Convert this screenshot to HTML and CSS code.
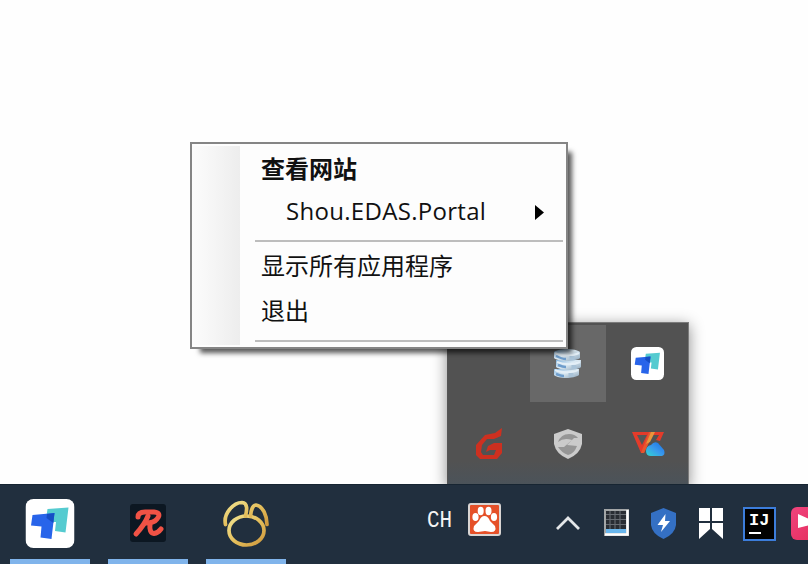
FILE: index.html
```html
<!DOCTYPE html>
<html lang="zh-CN">
<head>
<meta charset="utf-8">
<title>Desktop</title>
<link rel="stylesheet" href="styles.css">
</head>
<body>
<svg class="defs" width="0" height="0">
  <defs>
    <linearGradient id="gold" x1="0" y1="0" x2="1" y2="1"><stop offset="0" stop-color="#f1e491"/><stop offset=".5" stop-color="#e5c05d"/><stop offset="1" stop-color="#cf993d"/></linearGradient>
    <linearGradient id="cloud" x1="0" y1="1" x2="1" y2="0"><stop offset="0" stop-color="#32d6d1"/><stop offset=".5" stop-color="#3998ed"/><stop offset="1" stop-color="#176fe5"/></linearGradient>
    <linearGradient id="disk" x1="0" y1="0" x2="1" y2="1"><stop offset="0" stop-color="#81b2dc"/><stop offset=".45" stop-color="#dceaf3"/><stop offset="1" stop-color="#8ba5bb"/></linearGradient>
    <linearGradient id="pink" x1="0" y1="0" x2="1" y2="1"><stop offset="0" stop-color="#f0447d"/><stop offset="1" stop-color="#e42b5b"/></linearGradient>
    <symbol id="todesk" viewBox="0 0 49 49">
      <rect width="49" height="49" rx="8" fill="#fff"/>
      <path d="M22 10 43 8.5 40 33.5 29.5 32 30.5 23H20Z" fill="#55cbd0"/>
      <path d="M7 16 29 14 26 40 15 38.5 16 27.5 5.5 26.5Z" fill="#2864ea"/>
      <path d="M21.5 15 29 14 27.8 24 21 19Z" fill="#154dc5"/>
    </symbol>
  </defs>
</svg>
<main class="desktop">
  <section class="overflow">
    <div class="cell"></div>
    <div class="cell selected">
      <svg width="30" height="30" viewBox="0 0 30 30"><g fill="url(#disk)"><path d="M1 20v6c4 4 20 4 25 0v-6Z"/><path d="M3 11v7c5 4 21 4 25 0v-7Z"/><path d="M1 3v6c4 4 21 4 26 0V3C22-1 6-1 1 3Z"/></g><g fill="none"><path d="M2 4c6 3 18 3 24 0M4 13c7 3 17 3 23 0M2 21c6 3 18 3 23 0" stroke="#e4eff7" stroke-width="2"/><path d="M3 7q6 3 10 3M5 16q5 2 8 2M3 25q5 2 8 2" stroke="#6e9dcc" stroke-width="2.5"/><path d="M19 7v4m2 5v4m-3 4v4" stroke="#a9c3d8" stroke-width="5"/></g></svg>
    </div>
    <div class="cell"><svg width="33" height="33"><use href="#todesk"/></svg></div>
    <div class="cell">
      <svg width="28" height="32" viewBox="0 0 28 32"><path d="M27 0 26 8 19 11H12L7 17 6 24 8 27H19L21 22H15L11 24 13 18 19 15H27V25L22 31H5L1 27 1 17 10 7 20 5Z" fill="#cd3020"/></svg>
    </div>
    <div class="cell">
      <svg width="28" height="30" viewBox="0 0 28 30"><path d="M14 0 28 5V15Q26 25 14 30 2 25 0 15V5Z" fill="#cbcbcb"/><path d="M4 13Q7 5 15 5 21 5 24 9L20 9 13 16 23 17Q20 25 14 26 7 23 4 18L10 18 18 11Q10 8 4 13Z" fill="#969696"/></svg>
    </div>
    <div class="cell">
      <svg width="33" height="27" viewBox="0 0 33 27"><path d="M0 2H32L28 11 24 10 27 5H20L12 23H9Z" fill="#e43b2a"/><path d="M5 5H15L10 15Z" fill="#565656"/><path d="M17 2H22L12 23H9Z" fill="#e8562e"/><path d="M19 2H23L18 12 14 14Z" fill="#e9963b"/><path d="M14 21Q14 16 19 15 22 11 26 13L32 20Q34 26 28 26H19Q14 26 14 21Z" fill="url(#cloud)"/></svg>
    </div>
  </section>

  <nav class="menu">
    <div class="gutter"></div>
    <div class="items">
      <div class="item strong">查看网站</div>
      <div class="item sub"><span class="portal">Shou.EDAS.Portal</span><svg class="arrow" width="9" height="15"><path d="M0 0 9 7.5 0 15Z"/></svg></div>
      <div class="separator"></div>
      <div class="item all">显示所有应用程序</div>
      <div class="item exit">退出</div>
      <div class="separator last"></div>
    </div>
  </nav>

  <footer class="taskbar">
    <div class="apps">
      <div class="app"><svg width="80" height="75"><use href="#todesk" x="15.5" y="14" width="49" height="49"/></svg></div>
      <div class="app"><svg width="80" height="75"><rect x="22" y="19" width="36" height="38" rx="3" fill="#0c1722"/><g fill="none" stroke="#f05245" stroke-width="5" stroke-linecap="round" stroke-linejoin="round"><path d="M30 32Q30 27 37 27H46Q54 28 49 34 46 38 38 38"/><path d="M40 31Q37 39 28 49M42 39Q41 48 46 48.500 50 48 53 44"/></g></svg></div>
      <div class="app"><svg width="80" height="75"><g fill="none" stroke="url(#gold)" stroke-width="3.7" stroke-linejoin="round" stroke-linecap="round"><ellipse cx="40.5" cy="45.5" rx="17.5" ry="14.5"/><path d="M19.5 39.500C17 28 28 17.500 36 17.500 42 18 41 25 39.500 31M44.500 31C45 25 47 20 50 20 57 21 61 31 61 39.500"/></g></svg></div>
    </div>
    <div class="tray">
      <span class="lang"><span>CH</span></span>
      <svg class="paw" width="33" height="33" viewBox="0 0 33 33"><rect x="1" y="1" width="31" height="31" rx="2" fill="#e55028" stroke="#d9d5d3" stroke-width="2"/><g fill="#fff"><ellipse cx="7.5" cy="14" rx="3.1" ry="4"/><ellipse cx="12.7" cy="8" rx="3" ry="4.3"/><ellipse cx="20.5" cy="8" rx="3" ry="4.3"/><ellipse cx="26" cy="14" rx="3.1" ry="4"/><path d="M16.5 13Q20 13 22 18L27 23Q29 29 23 29L17 28 10 29Q4 29 6 23L11 18Q13 13 16.5 13Z"/></g></svg>
      <svg class="chevron" width="26" height="16"><path d="M2 13 13 2 24 13" fill="none" stroke="#e4e7e9" stroke-width="2.8"/></svg>
      <svg class="pad" width="25" height="27"><rect width="25" height="27" fill="#a3a6a7"/><rect x="2" y="2" width="20" height="19" fill="#292d33"/><path d="M2 5.5H22M2 10.5H22M2 15.5H22M6 2V21M11 2V21M16 2V21" stroke="#676c72" stroke-width="1.1"/><path d="M2 20H22V24H2Z" fill="#69b6ec"/><path d="M1 25.5H23.5V1" fill="none" stroke="#fff" stroke-width="2.5"/></svg>
      <svg class="guard" width="27" height="32"><path d="M13.5 0 26 5V17Q25 26 13.5 31 2 26 1 17V5Z" fill="#3470c4"/><path d="M15.5 6 7.5 17H13L11 24 20 13H15Z" fill="#fff"/></svg>
      <svg class="flag" width="24" height="32"><path d="M0 0H11V13H0ZM13 0H24V13H13ZM0 15H11V21L0 31ZM13 15H24V31L13 21Z" fill="#fff"/></svg>
      <div class="idea"><span>IJ</span><i></i></div>
      <svg class="clip" width="33" height="33"><rect width="33" height="33" rx="6" fill="url(#pink)"/><path d="M7 7 27 16 7 21Z" fill="#fff"/></svg>
    </div>
  </footer>
</main>
</body>
</html>
```
FILE: styles.css
```css
* { box-sizing: border-box; }
body { margin: 0; }
svg { display: block; flex: none; }
.defs { position: absolute; }
.desktop {
  position: relative;
  width: 808px;
  height: 564px;
  overflow: hidden;
  display: flex;
  flex-direction: column;
  justify-content: flex-end;
  background: #fefefe;
  font-family: "Open Sans", "Noto Sans CJK SC", sans-serif;
}
.overflow {
  position: absolute;
  left: 447px;
  top: 322px;
  width: 242px;
  height: 164px;
  padding: 2px 1px 0 3px;
  display: grid;
  grid-template-columns: 76px 76px 76px;
  grid-template-rows: 77px 77px;
  column-gap: 3px;
  row-gap: 3px;
  background: linear-gradient(#525252 85%, #4b535a);
  border: 1px solid #7b7b7b;
  border-left-color: #555;
  box-shadow: 0 3px 14px rgba(0, 0, 0, .45);
}
.cell { display: flex; align-items: center; justify-content: center; }
.cell:nth-child(3) { padding-left: 1px; }
.cell:nth-child(6) { padding-left: 2px; }
.selected { background: #686868; }
.menu {
  position: absolute;
  left: 190px;
  top: 142px;
  width: 378px;
  height: 207px;
  display: flex;
  padding: 2px 3px 2px 0;
  background: #fdfdfd;
  border: 2px solid #858585;
  box-shadow: 7px 7px 5px -3px rgba(0, 0, 0, .65);
}
.gutter { width: 48px; background: linear-gradient(90deg, #fcfcfc, #ededed); }
.items { flex: 1; margin-left: 15px; display: flex; flex-direction: column; }
.item {
  height: 45px;
  padding-left: 6px;
  display: flex;
  align-items: center;
  font-size: 24px;
  line-height: 36px;
  color: #111;
  white-space: nowrap;
}
.strong { height: 44px; padding-top: 1px; font-weight: 700; }
.sub { height: 50px; padding: 0 19px 9px 31px; justify-content: space-between; }
.portal { letter-spacing: .3px; }
.arrow { margin-top: 4px; fill: #000; }
.separator { height: 2px; background: #bdbdbd; }
.all { height: 51px; padding-bottom: 3px; }
.exit { height: 39px; padding-bottom: 3px; }
.last { margin-top: 8px; }
.taskbar {
  position: relative;
  height: 80px;
  display: flex;
  background: #212f3e;
  border-top: 1px solid #172532;
}
.apps { display: flex; gap: 18px; padding-left: 10px; flex: none; }
.app { width: 80px; height: 79px; border-bottom: 5px solid #80b4eb; }
.tray { display: flex; align-items: center; margin-left: 141px; height: 77px; flex: none; }
.lang {
  width: 41px;
  font: 21px/30px "Liberation Mono", monospace;
  color: #f4f4f4;
  margin-top: -6px;
}
.lang span { display: inline-block; transform: scaleY(1.15); }
.paw { margin-top: -8px; }
.chevron { margin-left: 54px; }
.pad { margin-left: 23px; margin-top: -2px; }
.guard { margin-left: 21px; }
.flag { margin-left: 22px; }
.idea {
  width: 33px;
  height: 34px;
  margin-left: 20px;
  padding: 2px 4px;
  background: #020202;
  border: 2px solid #3c7ddb;
}
.idea span { display: block; color: #fff; font: bold 17px/19px "Liberation Mono", monospace; }
.idea i { display: block; width: 12px; height: 2px; margin-top: 2px; background: #fff; }
.clip { margin-left: 15px; }
```
